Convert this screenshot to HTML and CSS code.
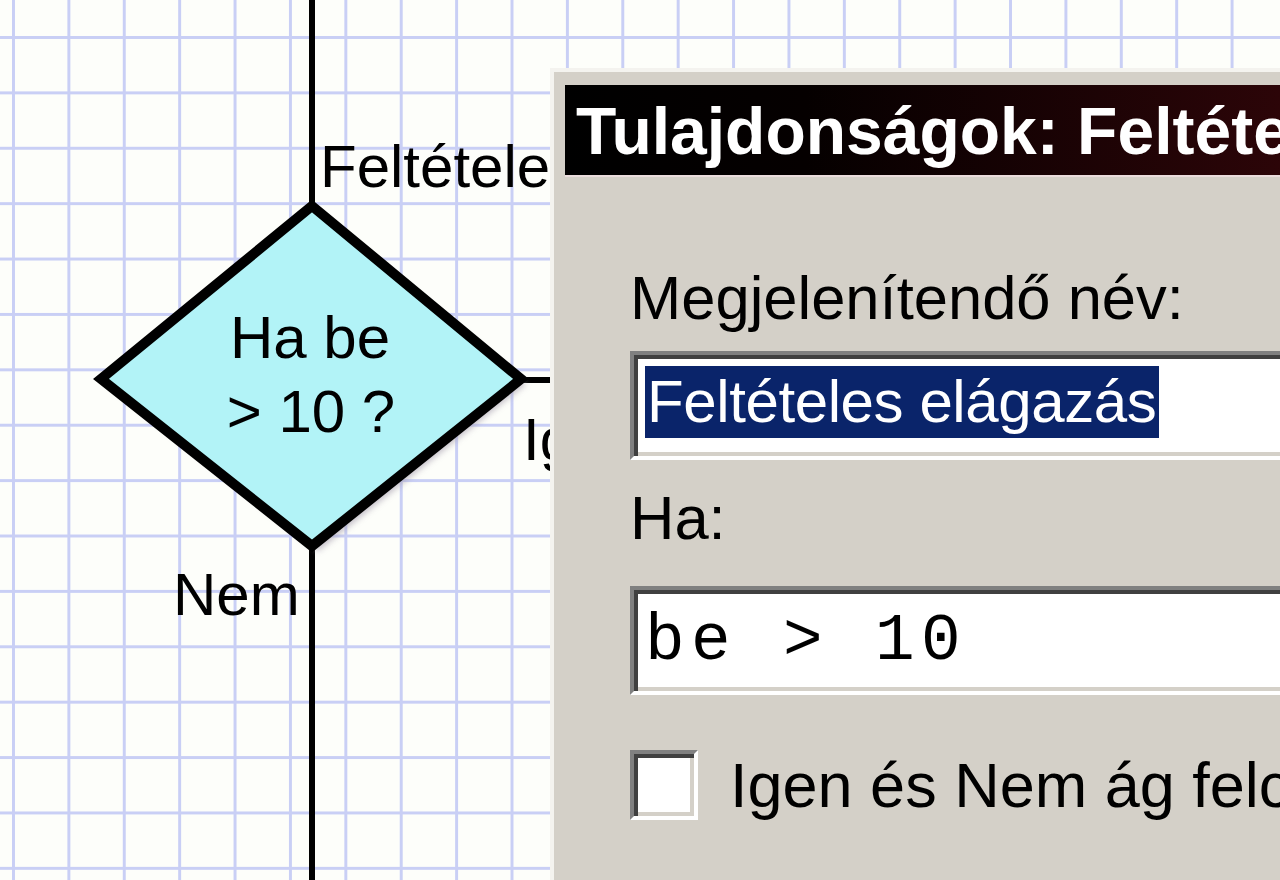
FILE: index.html
```html
<!DOCTYPE html>
<html lang="hu">
<head>
  <meta charset="UTF-8" />
  <meta name="viewport" content="width=device-width, initial-scale=1.0"/>
  <title>Folyamatábra - Feltételes elágazás</title>
  <link rel="stylesheet" href="styles.css">
</head>
<body>
  <div class="desktop">

    <!-- Flowchart canvas -->
    <svg class="flow" width="1280" height="880" viewBox="0 0 1280 880">
      <defs>
        <filter id="soft" x="-20%" y="-20%" width="140%" height="140%">
          <feGaussianBlur stdDeviation="3" />
        </filter>
        <clipPath id="underDialog">
          <rect x="0" y="0" width="552" height="880" />
        </clipPath>
      </defs>
      <line class="wire" x1="312" y1="0" x2="312" y2="208" />
      <line class="wire" x1="312" y1="542" x2="312" y2="880" />
      <line class="wire" x1="518" y1="380" x2="560" y2="380" />
      <polygon class="shadow" points="318,213 526,384 318,551 108,384" filter="url(#soft)" />
      <polygon class="decision" points="312,206 521,379 312,546 101,379" />
      <text class="node-text" x="310" y="358">Ha be</text>
      <text class="node-text" x="311" y="432">&gt; 10 ?</text>
      <g clip-path="url(#underDialog)">
        <text class="label" x="320" y="187">Feltétele</text>
        <text class="label" x="523" y="460">Ig</text>
      </g>
      <text class="label" x="173" y="615">Nem</text>
    </svg>

    <!-- Properties dialog -->
    <div class="dialog">
      <div class="titlebar">Tulajdonságok: Feltételes elágazás</div>
      <div class="dialog-body">
        <div class="field-label">Megjelenítendő név:</div>
        <div class="field">
          <span class="selected">Feltételes elágazás</span>
        </div>
        <div class="field-label second">Ha:</div>
        <div class="field field-code">be &gt; 10</div>
        <div class="check-row">
          <span class="checkbox"></span>
          <span class="check-label">Igen és Nem ág felcserélése</span>
        </div>
      </div>
    </div>

  </div>
</body>
</html>
```

FILE: styles.css
```css
* {
  box-sizing: border-box;
  margin: 0;
  padding: 0;
}

html, body {
  width: 1280px;
  height: 880px;
  overflow: hidden;
}

body {
  font-family: 'Liberation Sans', Arial, sans-serif;
  background-color: #fdfefa;
}

.desktop {
  position: relative;
  width: 1280px;
  height: 880px;
  overflow: hidden;
  background-color: #fdfefa;
  background-image:
    linear-gradient(90deg, #c9cff5 3px, transparent 3px),
    linear-gradient(#c9cff5 3px, transparent 3px);
  background-size: 55.4px 55.4px;
  background-position: 12px 36px;
}

/* Flowchart */
.flow {
  display: block;
}

.wire {
  stroke: #000;
  stroke-width: 6;
}

.decision {
  fill: #b2f3f7;
  stroke: #000;
  stroke-width: 10;
  stroke-linejoin: miter;
}

.shadow {
  fill: #a8a0b0;
  opacity: 0.7;
}

.flow text {
  font-family: 'Liberation Sans', Arial, sans-serif;
  font-size: 60px;
  fill: #000;
}

.node-text {
  text-anchor: middle;
}

/* Dialog window */
.dialog {
  position: absolute;
  left: 550px;
  top: 68px;
  width: 1000px;
  height: 900px;
  padding: 13px 0 0 11px;
  background-color: #d4d0c8;
  border-top: 4px solid #f4f3ef;
  border-left: 4px solid #f4f3ef;
  white-space: nowrap;
  overflow: hidden;
}

.titlebar {
  height: 92px;
  line-height: 92px;
  padding-left: 11px;
  color: #fff;
  font-size: 66px;
  font-weight: bold;
  background: linear-gradient(90deg, #000 0, #050000 240px, #2c0508 715px, #5a1018 100%);
  border-bottom: 2px solid #eadcdc;
  overflow: hidden;
}

.dialog-body {
  padding: 91px 0 0 65px;
}

.field-label {
  font-size: 61.5px;
  line-height: 60px;
  color: #000;
}

.field-label.second {
  margin-top: 28px;
}

.field {
  margin-top: 23px;
  height: 109px;
  padding: 11px 0 0 11px;
  background-color: #fff;
  border: 4px solid;
  border-color: #808080 #fff #fff #808080;
  box-shadow: inset 4px 4px 0 #404040, inset -4px -4px 0 #d4d0c8;
}

.selected {
  display: inline-block;
  height: 72px;
  line-height: 72px;
  padding: 0 3px 0 2px;
  font-size: 60px;
  letter-spacing: -0.4px;
  color: #fff;
  background-color: #0a246a;
}

.field-code {
  margin-top: 38px;
  padding-top: 5px;
  font-family: 'Liberation Mono', 'Courier New', monospace;
  font-size: 66px;
  letter-spacing: 6.4px;
  line-height: 93px;
  color: #000;
}

.check-row {
  display: flex;
  align-items: center;
  gap: 32px;
  margin-top: 55px;
}

.checkbox {
  width: 68px;
  height: 70px;
  flex-shrink: 0;
  background-color: #fff;
  border: 4px solid;
  border-color: #808080 #fff #fff #808080;
  box-shadow: inset 4px 4px 0 #404040, inset -4px -4px 0 #d4d0c8;
}

.check-label {
  font-size: 63px;
  line-height: 70px;
  color: #000;
}
```
